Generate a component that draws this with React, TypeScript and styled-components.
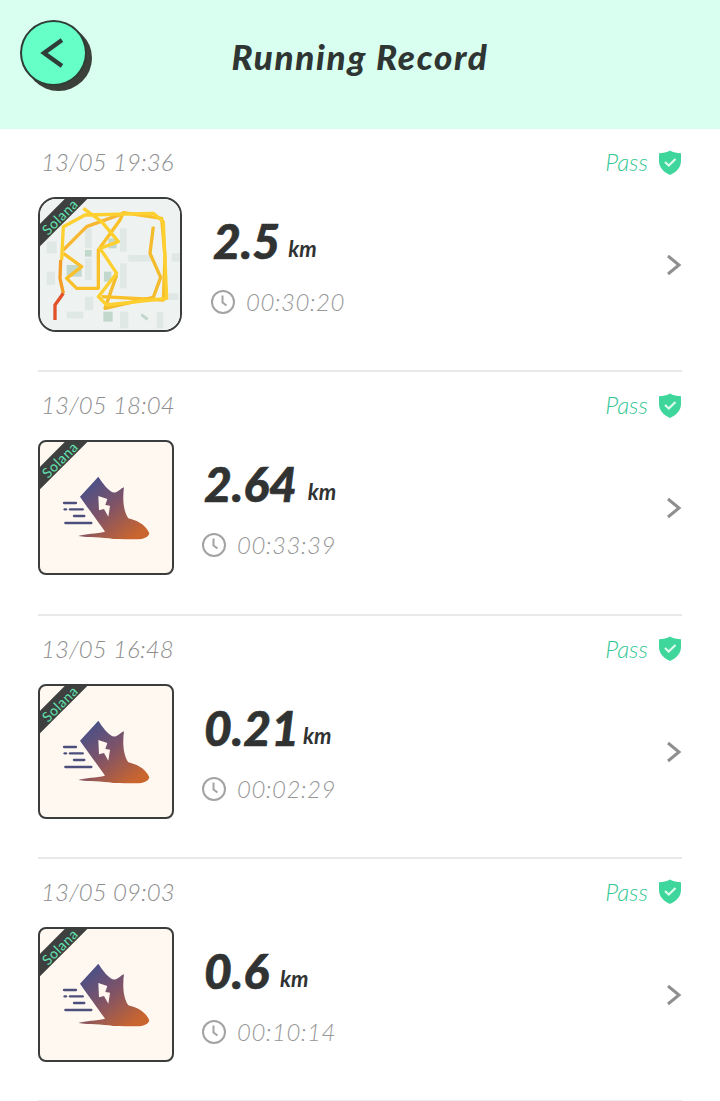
import { useId } from 'react';
import styled, { createGlobalStyle } from 'styled-components';

const records = [
    { time: '13/05 19:36', distance: '2.5', unitGap: 8, duration: '00:30:20', map: true },
    { time: '13/05 18:04', distance: '2.64', unitGap: 11, duration: '00:33:39', map: false },
    { time: '13/05 16:48', distance: '0.21', unitGap: 4, duration: '00:02:29', map: false },
    { time: '13/05 09:03', distance: '0.6', unitGap: 11, duration: '00:10:14', map: false },
];

function BackIcon() {
    return (
        <svg width="24" height="34" viewBox="0 0 24 34">
            <path d="M23 4 L5 17 L23 30" fill="none" stroke="#2f3d38" strokeWidth="4.400" />
        </svg>
    );
}

function ShieldIcon() {
    return (
        <svg width="24" height="27" viewBox="0 0 24 27">
            <path
                d="M12 1.500 C15 3.500 19 4.200 23 4.200 L23 12 C23 18.500 18.500 23 12 26 C5.500 23 1 18.500 1 12 L1 4.200 C5 4.200 9 3.500 12 1.500 Z"
                fill="#3fd69b"
            />
            <path d="M7 13 L10.800 16.500 L17.500 10" fill="none" stroke="#dffbef" strokeWidth="2.200" />
        </svg>
    );
}

function Chevron() {
    return (
        <svg width="16" height="22" viewBox="0 0 16 22">
            <path d="M2 2 L13 11 L2 20" fill="none" stroke="#8f8f8f" strokeWidth="3" />
        </svg>
    );
}

function ClockIcon() {
    return (
        <svg width="26" height="26" viewBox="0 0 26 26">
            <circle cx="13" cy="13" r="11" fill="none" stroke="#a3a3a3" strokeWidth="2" />
            <path d="M12.500 6.500 L12.500 13.500 L16.500 16.500" fill="none" stroke="#a3a3a3" strokeWidth="2" />
        </svg>
    );
}

// drawn in 3x units, read straight off the zoomed reference
function ShoeArt() {
    const id = useId();
    return (
        <svg width="136" height="135" viewBox="24 15 408 405">
            <defs>
                <linearGradient id={id} x1="0.150" y1="0.100" x2="0.850" y2="0.900">
                    <stop offset="0" stopColor="#4a5088" />
                    <stop offset="0.450" stopColor="#7e5368" />
                    <stop offset="1" stopColor="#c9652f" />
                </linearGradient>
            </defs>
            <path
                d="M205 125 C215 140 240 178 258 172 C268 168 272 160 282 157 C278 185 278 225 295 250 C315 255 345 265 358 295 C355 308 340 313 320 313 C295 313 275 312 250 312 C215 306 175 308 145 303 C165 296 200 296 225 290 C205 260 170 215 150 185 Z"
                fill={`url(#${id})`}
            />
            <path d="M205 183 L232 192 L226 210 L240 212 L235 245 L222 222 L207 226 Z" fill="#fff6ee" />
            <g stroke="#4c4f7c" strokeWidth="7" strokeLinecap="round">
                <path d="M102 204 L138 204" />
                <path d="M104 223 L108 223" />
                <path d="M120 223 L158 223" />
                <path d="M132 243 L163 243" />
                <path d="M106 264 L184 264" />
            </g>
        </svg>
    );
}

function MapArt() {
    return (
        <svg width="144" height="135" viewBox="24 21 432 405">
            <rect x="24" y="21" width="432" height="405" fill="#eef3f2" />
            <g fill="#e0e8e6">
                <rect x="165" y="115" width="20" height="60" />
                <rect x="165" y="205" width="20" height="65" />
                <rect x="270" y="115" width="20" height="70" />
                <rect x="270" y="220" width="20" height="75" />
                <rect x="295" y="195" width="75" height="20" />
                <rect x="165" y="320" width="25" height="40" />
                <rect x="110" y="365" width="50" height="20" />
                <rect x="270" y="365" width="25" height="50" />
                <rect x="380" y="365" width="20" height="50" />
                <rect x="415" y="310" width="30" height="20" />
                <rect x="425" y="190" width="25" height="25" />
                <rect x="50" y="245" width="25" height="40" />
                <rect x="50" y="155" width="30" height="35" />
            </g>
            <g fill="#c3d8cc">
                <rect x="165" y="180" width="20" height="20" />
                <rect x="110" y="225" width="45" height="35" />
                <rect x="235" y="145" width="25" height="30" />
                <rect x="222" y="245" width="22" height="30" />
                <rect x="220" y="365" width="28" height="30" />
                <path d="M335 370 L356 384 L350 392 L332 378 Z" />
            </g>
            <g fill="none" strokeLinejoin="round" strokeWidth="10">
                <path d="M100 180 L170 110 L280 70" stroke="#f7b733" />
                <path d="M370 110 L360 190 L392 262 L370 322 L225 355 L260 255" stroke="#f4bb2c" />
                <path d="M100 190 L155 230 L110 265 L140 295 L205 295 L205 180 L270 90 L280 68 L395 85 L405 200 L400 330 L215 320" stroke="#f9c02a" />
                <path d="M95 210 L100 110 L165 75 L370 70 L400 95 L410 325 L230 345 L205 320 L260 250 L210 175 L265 155 L215 95 L160 55" stroke="#fdd030" />
                <path d="M92 210 L90 265 L100 310" stroke="#f39c26" />
                <path d="M100 310 L75 345 L75 390" stroke="#e2512a" />
            </g>
        </svg>
    );
}

export default function App() {
    return (
        <>
            <GlobalStyle />
            <Header>
                <BackButton>
                    <BackIcon />
                </BackButton>
                <Title>Running Record</Title>
            </Header>

            <List>
                {records.map((r) => (
                    <Row key={r.time}>
                        <TopLine>
                            <DateText>{r.time}</DateText>
                            <Status>
                                <PassText>Pass</PassText>
                                <ShieldIcon />
                            </Status>
                        </TopLine>

                        <Body>
                            <Thumb $map={r.map}>
                                <ThumbClip $map={r.map}>
                                    {r.map ? <MapArt /> : <ShoeArt />}
                                    <Ribbon />
                                </ThumbClip>
                                <RibbonText>Solana</RibbonText>
                            </Thumb>

                            <Stats $map={r.map}>
                                <DistanceLine>
                                    <Distance>{r.distance}</Distance>
                                    <Unit $gap={r.unitGap}>km</Unit>
                                </DistanceLine>
                                <DurationLine>
                                    <ClockIcon />
                                    <Duration>{r.duration}</Duration>
                                </DurationLine>
                            </Stats>

                            <ChevronWrap>
                                <Chevron />
                            </ChevronWrap>
                        </Body>
                    </Row>
                ))}
            </List>
        </>
    );
}

const GlobalStyle = createGlobalStyle`
    html, body {
        margin: 0;
        padding: 0;
        background: #fff;
        font-family: 'Lato', 'Liberation Sans', sans-serif;
    }
`;

const Header = styled.header`
    height: 129px;
    background: #d8fff0;
    position: relative;
    display: flex;
    align-items: flex-start;
    justify-content: center;
`;

const BackButton = styled.div`
    position: absolute;
    left: 20px;
    top: 20px;
    width: 67px;
    height: 66px;
    border-radius: 50%;
    background: #66ffc7;
    border: 2px solid #2f3d38;
    box-shadow: 5px 5px 0 #3c403a;
    display: flex;
    align-items: center;
    justify-content: center;
    box-sizing: border-box;
    padding-right: 5px;
`;

const Title = styled.h1`
    margin: 36px 0 0;
    font-size: 35px;
    line-height: 40px;
    font-weight: 900;
    font-style: italic;
    color: #2f3533;
    letter-spacing: 1.7px;
`;

const List = styled.main`
    padding: 0 38px;
`;

const Row = styled.section`
    height: 243.3px;
    border-bottom: 2px solid #e9e9e9;
    box-sizing: border-box;
`;

const TopLine = styled.div`
    height: 68px;
    display: flex;
    justify-content: space-between;
    align-items: flex-start;
    padding-top: 17px;
    box-sizing: border-box;
`;

const DateText = styled.span`
    font-size: 24px;
    line-height: 32px;
    font-style: italic;
    font-weight: 300;
    color: #8e8e8e;
    margin-left: 3px;
    letter-spacing: 0.1px;
`;

const Status = styled.div`
    display: flex;
    align-items: center;
    gap: 10px;
`;

const PassText = styled.span`
    font-size: 24px;
    line-height: 32px;
    font-style: italic;
    font-weight: 300;
    color: #35c795;
`;

const Body = styled.div`
    display: flex;
    align-items: flex-start;
`;

const Thumb = styled.div<{ $map: boolean }>`
    position: relative;
    width: ${(p) => (p.$map ? '144px' : '136px')};
    height: 135px;
    flex-shrink: 0;
`;

const ThumbClip = styled.div<{ $map: boolean }>`
    position: relative;
    height: 100%;
    border: 2px solid #3a3d3b;
    border-radius: ${(p) => (p.$map ? '18px' : '8px')};
    background: #fff8f0;
    overflow: hidden;
    box-sizing: border-box;

    svg {
        display: block;
        margin: -2px;
    }
`;

const Ribbon = styled.div`
    position: absolute;
    left: -32px;
    top: 10px;
    width: 100px;
    height: 16px;
    background: #3d403e;
    transform: rotate(-45deg);
`;

const RibbonText = styled.span`
    position: absolute;
    left: 0;
    top: 10px;
    width: 44px;
    text-align: center;
    font-size: 14px;
    line-height: 20px;
    color: #62e3b2;
    letter-spacing: 0.6px;
    transform: rotate(-45deg);
`;

const Stats = styled.div<{ $map: boolean }>`
    flex: 1;
    padding-left: ${(p) => (p.$map ? '31px' : '30px')};
    display: flex;
    flex-direction: column;
`;

const DistanceLine = styled.div`
    display: flex;
    align-items: baseline;
    height: 89px;
    padding-top: 18px;
    box-sizing: border-box;
`;

const Distance = styled.span`
    font-size: 48px;
    line-height: 52px;
    font-weight: 900;
    font-style: italic;
    color: #303332;
    -webkit-text-stroke: 0.6px #303332;
`;

const Unit = styled.span<{ $gap: number }>`
    margin-left: ${(p) => p.$gap}px;
    font-size: 22px;
    font-weight: 700;
    font-style: italic;
    color: #303332;
    transform: translateY(-2px);
`;

const DurationLine = styled.div`
    display: flex;
    align-items: center;
    gap: 10px;
    margin-left: -3px;
    height: 32px;
`;

const Duration = styled.span`
    font-size: 24px;
    line-height: 32px;
    font-style: italic;
    font-weight: 300;
    color: #979797;
    letter-spacing: 0.5px;
`;

const ChevronWrap = styled.div`
    width: 16px;
    margin-top: 57px;
    flex-shrink: 0;
`;
